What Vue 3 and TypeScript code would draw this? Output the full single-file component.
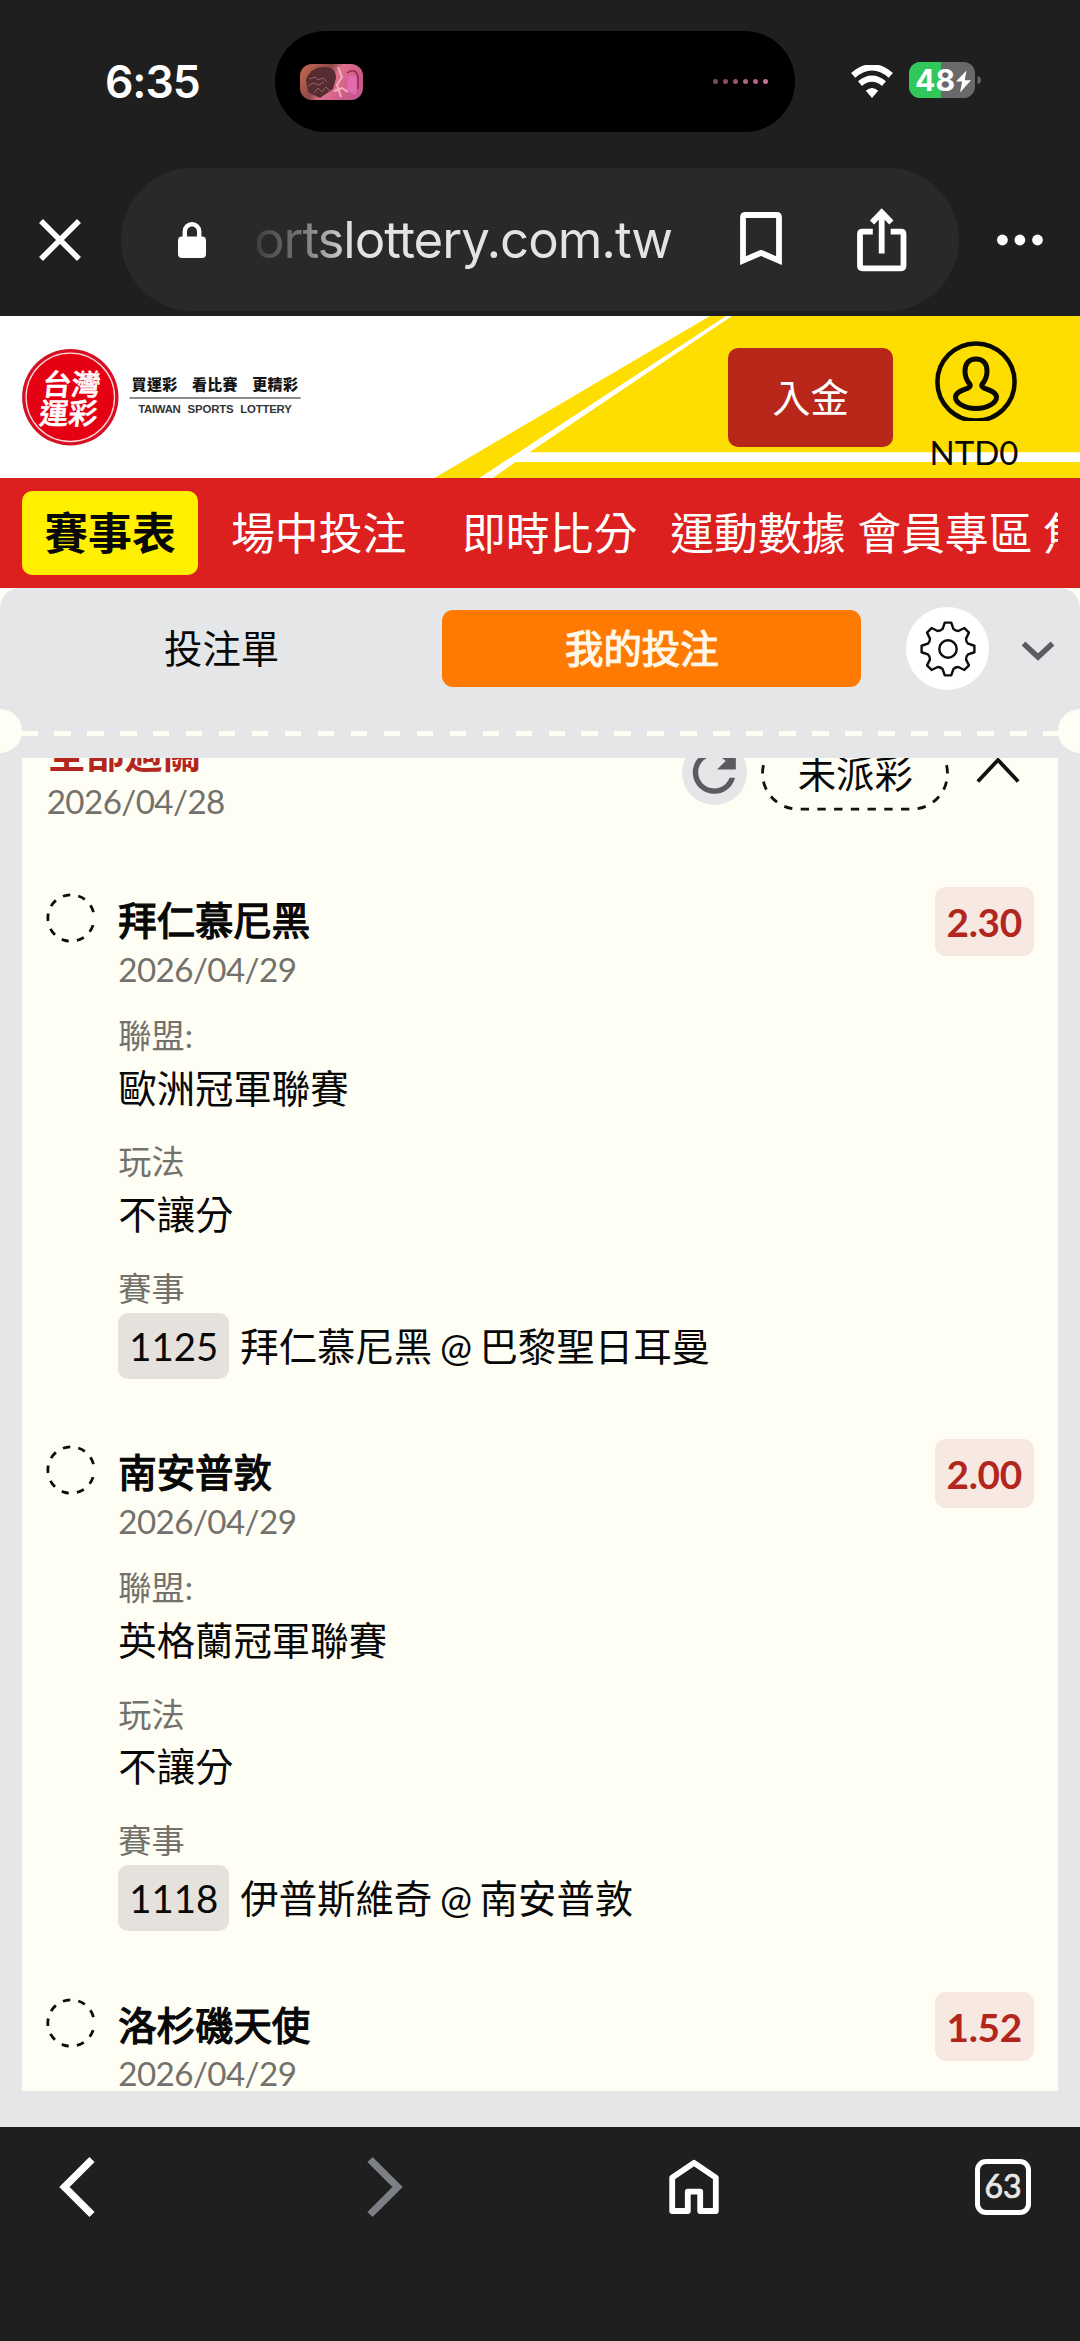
<script setup lang="ts">
interface Leg {
  team: string
  date: string
  odds: string
  league: string
  play: string
  code: string
  match: string
}

interface NavItem {
  label: string
  gap: number
}

const navItems: NavItem[] = [
  { label: '場中投注', gap: 33 },
  { label: '即時比分', gap: 55.5 },
  { label: '運動數據', gap: 33 },
  { label: '會員專區', gap: 11.5 },
  { label: '焦', gap: 10.5 },
]

const legs: Leg[] = [
  { team: '拜仁慕尼黑', date: '2026/04/29', odds: '2.30', league: '歐洲冠軍聯賽', play: '不讓分', code: '1125', match: '拜仁慕尼黑 @ 巴黎聖日耳曼' },
  { team: '南安普敦', date: '2026/04/29', odds: '2.00', league: '英格蘭冠軍聯賽', play: '不讓分', code: '1118', match: '伊普斯維奇 @ 南安普敦' },
  { team: '洛杉磯天使', date: '2026/04/29', odds: '1.52', league: '', play: '', code: '', match: '' },
]

const dotColors = ['#7d4a58', '#8f4f60', '#9c5668', '#ad6a80', '#bb6286', '#c9709a']

// Eight-tooth gear outline centred on the origin
const polar = (r: number, deg: number): string => {
  const a = (deg * Math.PI) / 180
  return `${(r * Math.cos(a)).toFixed(2)} ${(r * Math.sin(a)).toFixed(2)}`
}
const gearPath = Array.from({ length: 8 }, (_, i) => {
  const a = i * 45
  return `${i ? 'L' : 'M'}${polar(26.6, a - 7)}L${polar(26.6, a + 7)}L${polar(20.8, a + 15)}Q${polar(19.4, a + 22.5)} ${polar(20.8, a + 30)}`
}).join('') + 'Z'

const ringDash = Array.from({ length: 8 }, () => '18.5 20.1').join(' ') + ' 18.5 32.7'
</script>

<template>
  <div class="screen">
    <header class="browser-top">
      <div class="status">
        <span class="clock">6:35</span>
        <div class="island">
          <svg class="album" width="63" height="36" viewBox="0 0 63 36">
            <defs>
              <clipPath id="albumClip"><rect width="63" height="36" rx="12" /></clipPath>
              <linearGradient id="albumFill" x1="0" x2="1" y1="0" y2=".4">
                <stop offset="0" stop-color="#c9694f" />
                <stop offset=".45" stop-color="#8e4a4a" />
                <stop offset=".6" stop-color="#e0718d" />
                <stop offset="1" stop-color="#c8578c" />
              </linearGradient>
            </defs>
            <g clip-path="url(#albumClip)">
              <rect width="63" height="36" fill="url(#albumFill)" />
              <path d="M6 16Q10 4 22 3Q36 2 36 14L33 25L20 34L8 28Z" fill="#552c30" />
              <path d="M9 15l6-2 3 3 5-2 4 4M8 22l5-3 6 2 5-3M14 29l4-5 4 4 4-5 5 5" fill="none" stroke="#94606a" stroke-width="1" />
              <path d="M38 3l4 10-5 8 4 12M34 27l8-3 6 4" fill="none" stroke="#f3aeb9" stroke-width="2" />
              <path d="M48 14q8-6 9 3l-1 14-9-4z" fill="#e36cae" />
              <path d="M47 9q9-6 11 4l0 12" fill="none" stroke="#9a274c" stroke-width="1.5" />
            </g>
          </svg>
          <div class="wave">
            <i v-for="(c, i) in dotColors" :key="i" :style="{ background: c }"></i>
          </div>
        </div>
        <svg class="wifi" width="44" height="34" viewBox="0 0 44 34">
          <path d="M3.2 10.4Q22-5.8 40.8 10.4" fill="none" stroke="#fff" stroke-width="6.4" />
          <path d="M10 18.7Q22 8.6 34 18.7" fill="none" stroke="#fff" stroke-width="6.2" />
          <path d="M15.8 25.8Q22 20.2 28.2 25.8L22 33Z" fill="#fff" />
        </svg>
        <svg class="battery" width="74" height="36" viewBox="0 0 74 36">
          <defs><clipPath id="batteryClip"><rect width="66" height="36" rx="11.5" /></clipPath></defs>
          <g clip-path="url(#batteryClip)">
            <rect width="66" height="36" fill="#69696b" />
            <rect width="32" height="36" fill="#32c759" />
          </g>
          <path d="M68.5 14Q72 15 72 18T68.5 22Z" fill="#69696b" />
          <text x="6" y="29" textLength="40" lengthAdjust="spacingAndGlyphs" class="battery-num">48</text>
          <path d="M57.5 8.5L47 19.5h6.2L51 30.5L62 18.2h-6.3Z" fill="#fff" />
        </svg>
      </div>

      <div class="address-row">
        <svg class="close" width="42" height="42" viewBox="0 0 42 42">
          <path d="M2 2L40 40M40 2L2 40" stroke="#fff" stroke-width="5.6" />
        </svg>
        <div class="address">
          <svg class="lock" width="28" height="36" viewBox="0 0 28 36">
            <rect y="14.5" width="28" height="21.5" rx="4" fill="#fff" />
            <path d="M6.8 17V9.5a7.2 7.2 0 0 1 14.4 0V17" fill="none" stroke="#fff" stroke-width="4.4" />
          </svg>
          <svg class="url" width="418" height="70" viewBox="0 0 418 70">
            <defs>
              <linearGradient id="urlFade" gradientUnits="userSpaceOnUse" x1="0" x2="96" y1="0" y2="0">
                <stop offset="0" stop-color="#3f4042" />
                <stop offset=".5" stop-color="#7b7c7e" />
                <stop offset="1" stop-color="#e3e3e6" />
              </linearGradient>
            </defs>
            <text x="-3" y="52.5" textLength="419" fill="url(#urlFade)">ortslottery.com.tw</text>
          </svg>
          <svg class="bookmark" width="42" height="54" viewBox="0 0 42 54">
            <path d="M3 48.6V5.5Q3 3 5.5 3H36.5Q39 3 39 5.5V48.6L21 40.8Z" fill="none" stroke="#fff" stroke-width="5.8" />
          </svg>
          <svg class="share" width="50" height="64" viewBox="0 0 50 64">
            <path d="M15.8 23.7H5.5Q3 23.7 3 26.2V57.8Q3 60.3 5.5 60.3H44Q46.5 60.3 46.5 57.8V26.2Q46.5 23.7 44 23.7H33.7" fill="none" stroke="#fff" stroke-width="5.8" />
            <path d="M24.7 45.5V6M15 14.5L24.7 4.5L34.4 14.5" fill="none" stroke="#fff" stroke-width="5.8" />
          </svg>
        </div>
        <svg class="more" width="46" height="12" viewBox="0 0 46 12">
          <g fill="#fff"><circle cx="5.4" cy="6" r="5.4" /><circle cx="22.9" cy="6" r="5.4" /><circle cx="40.5" cy="6" r="5.4" /></g>
        </svg>
      </div>
    </header>

    <section class="brand">
      <svg class="stripes" width="1080" height="162" viewBox="0 0 1080 162">
        <path d="M434.5 162L710 0H1080V162Z" fill="#fedd00" />
        <path d="M479.3 162L726 0H732L529.5 136.3H1080V146H515.5L492.8 162Z" fill="#fff" />
      </svg>
      <svg class="logo" width="290" height="98" viewBox="0 0 290 98">
        <circle cx="48.3" cy="48.3" r="48.2" fill="#d60f22" />
        <circle cx="48.3" cy="48.3" r="44.2" fill="#e60013" stroke="#ffd9dc" stroke-width="1.3" />
        <g class="logo-mark" transform="translate(48.3 48.3) skewX(-6)">
          <text x="-29" y="-2.4" textLength="58">台灣</text>
          <text x="-29" y="26.4" textLength="58">運彩</text>
        </g>
        <g class="slogan">
          <text x="109.6" y="41" textLength="45.6">買運彩</text>
          <text x="170" y="41" textLength="45.6">看比賽</text>
          <text x="230.3" y="41" textLength="45.6">更精彩</text>
        </g>
        <path d="M107.5 49H278.6" stroke="#666" stroke-width="1.3" />
        <g class="english">
          <text x="116.2" y="63.8" textLength="42.6">TAIWAN</text>
          <text x="165.6" y="63.8" textLength="46">SPORTS</text>
          <text x="218.2" y="63.8" textLength="51.6">LOTTERY</text>
        </g>
      </svg>
      <button class="deposit">入金</button>
      <div class="account">
        <svg width="82" height="80" viewBox="0 0 82 80" fill="none" stroke="#0a0900">
          <circle cx="41" cy="41" r="38.6" stroke-width="4.5" />
          <path d="M41 17.9C34 17.9 30 22.6 30 30C30 36 31.7 39.6 34.8 43C36 44.6 35 46 33.2 46.9C27 49.7 20.5 51 20.5 56.2C20.5 61.6 29.5 67.6 41 67.6S61.5 61.6 61.5 56.2C61.5 51 55 49.7 48.8 46.9C47 46 46 44.6 47.2 43C50.3 39.6 52 36 52 30C52 22.6 48 17.9 41 17.9Z" stroke-width="5" />
        </svg>
        <span>NTD0</span>
      </div>
    </section>

    <nav class="nav">
      <div class="nav-scroll">
        <span class="nav-active">賽事表</span>
        <span v-for="n in navItems" :key="n.label" class="nav-item" :style="{ marginLeft: n.gap + 'px' }">{{ n.label }}</span>
      </div>
    </nav>

    <main class="slip">
      <div class="tabs">
        <span class="tab">投注單</span>
        <span class="tab tab-on">我的投注</span>
        <span class="gear">
          <svg width="58" height="58" viewBox="-29 -29 58 58" fill="none" stroke="#0c0c0c" stroke-width="2.4" stroke-linejoin="round">
            <path :d="gearPath" />
            <circle r="8.7" />
          </svg>
        </span>
        <svg class="down" width="34" height="20" viewBox="0 0 34 20">
          <path d="M2.5 2.5L17 16L31.5 2.5" fill="none" stroke="#5b5c60" stroke-width="5.4" />
        </svg>
      </div>

      <div class="perforation">
        <i class="hole"></i>
        <i class="dashes"></i>
        <i class="hole"></i>
      </div>

      <section class="ticket">
        <div class="ticket-head">
          <div class="ticket-title">
            <h2>全部過關</h2>
            <time>2026/04/28</time>
          </div>
          <span class="refresh">
            <svg width="64.6" height="64.6" viewBox="0 0 24 24" fill="#5b5c60">
              <path d="M17.65 6.35C16.2 4.9 14.21 4 12 4c-4.42 0-7.99 3.58-7.99 8s3.57 8 7.99 8c3.73 0 6.84-2.55 7.73-6h-2.08c-.82 2.33-3.04 4-5.65 4-3.31 0-6-2.69-6-6s2.69-6 6-6c1.66 0 3.14.69 4.22 1.78L13 11h7V4l-2.35 2.35z" />
            </svg>
          </span>
          <span class="state">
            <svg class="state-ring" width="188" height="75" viewBox="0 0 188 75">
              <path d="M94 73.2H37.3A35.8 35.8 0 0 1 37.3 1.6H150.7A35.8 35.8 0 0 1 150.7 73.2Z" pathLength="27" fill="none" stroke="#111" stroke-width="2.8" stroke-dasharray=".5 .5" stroke-dashoffset=".25" />
            </svg>
            <span class="state-label">未派彩</span>
          </span>
          <svg class="up" width="44" height="26" viewBox="0 0 44 26">
            <path d="M1.8 24.5L22 3L42.2 24.5" fill="none" stroke="#111" stroke-width="3.8" />
          </svg>
        </div>

        <article v-for="leg in legs" :key="leg.team" class="leg">
          <svg class="ring" width="50" height="50" viewBox="-25 -25 50 50">
            <circle r="23.2" pathLength="360" fill="none" stroke="#0c0c0c" stroke-width="2.8" :stroke-dasharray="ringDash" transform="rotate(18)" />
          </svg>
          <div class="leg-body">
            <h3>{{ leg.team }}</h3>
            <time>{{ leg.date }}</time>
            <template v-if="leg.league">
              <div class="label first">聯盟:</div>
              <div class="value">{{ leg.league }}</div>
              <div class="label">玩法</div>
              <div class="value">{{ leg.play }}</div>
              <div class="label">賽事</div>
              <div class="match">
                <span class="code">{{ leg.code }}</span>
                <span class="teams">{{ leg.match }}</span>
              </div>
            </template>
          </div>
          <span class="odds">{{ leg.odds }}</span>
        </article>
      </section>
    </main>

    <footer class="browser-bottom">
      <svg width="36" height="62" viewBox="0 0 36 62"><path d="M33 3.5L5.5 31L33 58.5" fill="none" stroke="#fff" stroke-width="7.4" /></svg>
      <svg class="forward" width="36" height="62" viewBox="0 0 36 62"><path d="M3 3.5L30.5 31L3 58.5" fill="none" stroke="#7c7f84" stroke-width="7.4" /></svg>
      <svg class="home" width="50" height="56" viewBox="0 0 50 56">
        <path d="M25 3.8L3.2 18.6V52H18.8V32.6H31.2V52H46.8V18.6Z" fill="none" stroke="#fff" stroke-width="5.8" stroke-linejoin="round" />
      </svg>
      <span class="tab-count">63</span>
    </footer>
  </div>
</template>

<style>
body {
  background: #1f1f1f;
}
</style>

<style scoped>
.screen {
  width: 1080px;
  height: 2341px;
  overflow: hidden;
  display: flex;
  flex-direction: column;
  background: #fffef5;
  color: #080808;
  font-family: Lato, "Noto Sans CJK TC", sans-serif;
}
svg {
  display: block;
  flex: none;
}
.browser-top {
  height: 316px;
  flex: none;
  background: #1f1f1f;
}
.status {
  display: flex;
  align-items: center;
  height: 101px;
  padding: 31px 0 0 105px;
}
.clock {
  width: 170px;
  font: 600 44.5px/60px Inter, sans-serif;
  letter-spacing: -1.1px;
  color: #fff;
}
.island {
  box-sizing: border-box;
  display: flex;
  align-items: center;
  justify-content: space-between;
  width: 520px;
  height: 101px;
  padding: 0 27px 0 25px;
  border-radius: 51px;
  background: #000;
}
.wave {
  display: flex;
  gap: 5.1px;
}
.wave i {
  width: 5px;
  height: 5px;
  border-radius: 50%;
}
.wifi {
  margin-left: 55px;
}
.battery {
  margin-left: 15px;
  margin-top: -3px;
}
.battery-num {
  font: 700 29.5px Inter, sans-serif;
  fill: #fff;
}
.address-row {
  display: flex;
  align-items: center;
  margin-top: 36px;
  padding-left: 38.5px;
}
.address {
  box-sizing: border-box;
  display: flex;
  align-items: center;
  width: 838.5px;
  height: 143px;
  margin-left: 40px;
  padding-left: 57.5px;
  border-radius: 72px;
  background: #28292b;
}
.url {
  margin-left: 51px;
  font: 400 51px Inter, sans-serif;
}
.bookmark {
  margin-left: 65px;
  margin-top: -2px;
}
.share {
  margin-left: 75px;
}
.more {
  margin-left: 37.5px;
}
.brand {
  position: relative;
  display: flex;
  height: 162px;
  flex: none;
  background: #fff;
}
.stripes {
  position: absolute;
  left: 0;
  top: 0;
}
.logo {
  position: relative;
  margin: 32.5px 0 0 22px;
}
.logo-mark {
  font: 500 29px "Noto Sans CJK TC", sans-serif;
  fill: #fff;
  stroke: #fff;
  stroke-width: 0.6px;
}
.slogan {
  font: 900 15px "Noto Sans CJK TC", sans-serif;
  fill: #151515;
}
.english {
  font: 700 11.4px "Liberation Sans", sans-serif;
  fill: #333;
}
.deposit {
  position: relative;
  width: 165px;
  height: 99px;
  margin: 32px 0 0 416px;
  padding: 0;
  border: 0;
  border-radius: 10px;
  background: #b8271a;
  color: #fff;
  font: 400 38.3px/99px Lato, "Noto Sans CJK TC", sans-serif;
}
.account {
  position: relative;
  display: flex;
  flex-direction: column;
  align-items: center;
  margin: 25px 0 0 40.5px;
}
.account span {
  margin: 10.5px 0 0 -4px;
  font-size: 33px;
  line-height: 40px;
}
.nav {
  box-sizing: border-box;
  height: 110px;
  flex: none;
  padding: 0 22px;
  background: #dc1f1f;
}
.nav-scroll {
  display: flex;
  align-items: center;
  height: 110px;
  overflow: hidden;
  white-space: nowrap;
  font-size: 43.85px;
}
.nav-active {
  flex: none;
  width: 176px;
  height: 84px;
  border-radius: 10px;
  background: #fff000;
  font-weight: 700;
  line-height: 84px;
  text-align: center;
}
.nav-item {
  flex: none;
  color: #fff;
  line-height: 84px;
}
.slip {
  box-sizing: border-box;
  height: 1538.5px;
  flex: none;
  border-radius: 20px 20px 0 0;
  background: #e5e6e8;
  overflow: hidden;
}
.tabs {
  display: flex;
  align-items: center;
  height: 121px;
}
.tab {
  box-sizing: border-box;
  width: 441.8px;
  padding-left: 1.5px;
  font-size: 38.4px;
  line-height: 77px;
  text-align: center;
}
.tab-on {
  width: 419px;
  padding: 0 19px 0 0;
  border-radius: 11px;
  background: #ff7a00;
  color: #fff8ea;
  -webkit-text-stroke: 1.2px #fff8ea;
}
.gear {
  display: flex;
  align-items: center;
  justify-content: center;
  width: 82.5px;
  height: 83px;
  margin-left: 45.3px;
  padding-left: 0.8px;
  box-sizing: border-box;
  border-radius: 50%;
  background: #fff;
}
.down {
  margin-left: 32px;
  margin-top: 4px;
}
.perforation {
  display: flex;
  align-items: center;
  height: 44px;
}
.hole {
  flex: none;
  width: 44px;
  height: 44px;
  margin: 0 -22px;
  border-radius: 50%;
  background: #fffef5;
}
.dashes {
  flex: 1;
  height: 5.5px;
  margin: 5px 20.5px 0;
  background: repeating-linear-gradient(90deg, #fffef5 0 16.6px, transparent 16.6px 32.97px);
}
.ticket {
  height: 1333px;
  margin: 5px 22px 0;
  overflow: hidden;
  background: #fffef5;
}
.ticket-head {
  display: flex;
  align-items: flex-start;
  height: 157px;
  margin-top: -28px;
  padding-left: 25.5px;
}
.ticket-title {
  width: 634.5px;
}
h2,
h3 {
  margin: 0;
  font-size: 38.4px;
  line-height: 46px;
}
h2 {
  color: #b3261e;
  font-weight: 700;
}
h3 {
  font-weight: 400;
  -webkit-text-stroke: 1.3px #080808;
}
time {
  display: block;
  color: #73716c;
  font-size: 33.2px;
  letter-spacing: -0.6px;
  line-height: 44px;
}
.ticket-title time {
  margin: 2.5px 0 0 -0.8px;
}
.refresh {
  width: 65px;
  height: 65px;
  margin-top: 9.5px;
  border-radius: 50%;
  background: #e5e6e8;
}
.state {
  display: grid;
  margin: 5.5px 0 0 14.3px;
}
.state-ring,
.state-label {
  grid-area: 1 / 1;
}
.state-label {
  font-size: 38.4px;
  line-height: 75px;
  text-align: center;
}
.up {
  margin: 26.5px 0 0 26.5px;
}
.leg {
  display: flex;
  align-items: flex-start;
  height: 552.4px;
  padding: 0 24.5px 0 24px;
}
.ring {
  margin-top: 6px;
}
.leg-body {
  flex: 1;
  margin-left: 22.3px;
  padding-top: 10px;
}
.leg-body time {
  margin-top: 3.5px;
}
.label {
  margin-top: 30.5px;
  color: #73716c;
  font-size: 33.2px;
  line-height: 40px;
}
.label.first {
  margin-top: 24.5px;
}
.value {
  margin-top: 9.5px;
  font-size: 38.4px;
  line-height: 46px;
}
.value + .label {
  margin-top: 30.8px;
}
.match {
  display: flex;
  align-items: center;
  margin-top: 5.4px;
  font-size: 38.4px;
  line-height: 66px;
}
.code {
  width: 111px;
  border-radius: 10px;
  background: #e5e2de;
  text-align: center;
}
.teams {
  margin-left: 11px;
  word-spacing: -2.2px;
}
.odds {
  width: 98.5px;
  padding-top: 1px;
  border-radius: 11px;
  background: #f7e8e1;
  color: #b3261e;
  font-size: 38.77px;
  font-weight: 700;
  letter-spacing: -0.3px;
  line-height: 68px;
  text-align: center;
}
.browser-bottom {
  display: flex;
  align-items: center;
  flex: 1;
  padding: 0 0 93px 58.5px;
  background: #1f1f1f;
}
.forward {
  margin-left: 272.8px;
}
.home {
  margin-left: 265.5px;
}
.tab-count {
  box-sizing: border-box;
  width: 55.5px;
  height: 56px;
  margin-left: 256.5px;
  border: 5.6px solid #fff;
  border-radius: 11px;
  color: #e8e8e8;
  font-size: 32px;
  line-height: 44px;
  text-align: center;
  -webkit-text-stroke: 0.7px #e8e8e8;
}
</style>
